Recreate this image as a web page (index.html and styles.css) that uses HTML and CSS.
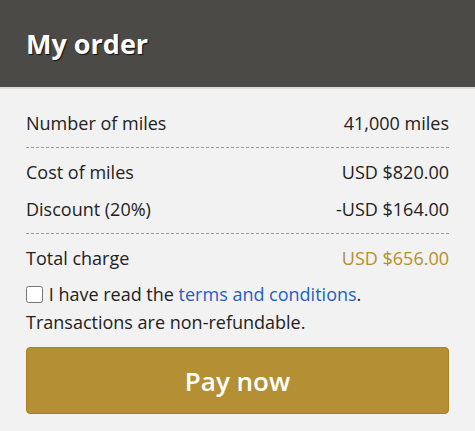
FILE: index.html
```html
<!DOCTYPE html>
<html>
<head>
<meta charset="utf-8">
<link rel="stylesheet" href="styles.css">
</head>
<body>
<header class="head"><h1 class="title">My order</h1></header>
<main class="content">
  <div class="group">
    <div class="row"><span>Number of miles</span><span>41,000 miles</span></div>
  </div>
  <div class="group">
    <div class="row"><span>Cost of miles</span><span>USD $820.00</span></div>
    <div class="row"><span>Discount (20%)</span><span>-USD $164.00</span></div>
  </div>
  <div class="group last">
    <div class="row"><span>Total charge</span><span class="total">USD $656.00</span></div>
  </div>
  <p class="terms"><input type="checkbox" class="check"> I have read the <a href="#" class="link">terms and conditions</a>.<br>Transactions are non-refundable.</p>
  <button class="pay">Pay now</button>
</main>
</body>
</html>
```
FILE: styles.css
```css
html, body { margin: 0; padding: 0; }
body {
  background: #f2f2f2;
  font-family: "Open Sans", "Noto Sans", sans-serif;
  color: #222;
  width: 475px;
}
.head {
  background: #4c4a47;
  height: 89px;
  border-bottom: 2px solid #dcdcdc;
  box-sizing: border-box;
  display: flex;
  align-items: center;
  padding: 0 26px;
}
.title {
  margin: 0;
  color: #fff;
  font-size: 27px;
  font-weight: 700;
  text-shadow: 1px 1px 1px #111;
}
.content { padding: 10px 26px 0 26px; }
.group {
  border-bottom: 1px dashed #9a9a9a;
  padding: 6px 0 5px;
}
.group.last { border-bottom: none; padding-bottom: 3px; }
.row {
  display: flex;
  justify-content: space-between;
  font-size: 18px;
  line-height: 37px;
}
.total { color: #b58f2a; }
.terms {
  margin: 0;
  font-size: 18px;
  line-height: 28px;
}
.check {
  margin: 0 1px 0 0;
  width: 17px;
  height: 17px;
  vertical-align: -2px;
}
.link { color: #1f5fc8; text-decoration: none; }
.pay {
  display: block;
  margin-top: 11px;
  width: 100%;
  height: 67px;
  background: #b58f33;
  border: 1px solid #a88325;
  border-radius: 4px;
  color: #fff;
  font-family: "Open Sans", "Noto Sans", sans-serif;
  font-size: 26px;
  font-weight: 600;
}
```
